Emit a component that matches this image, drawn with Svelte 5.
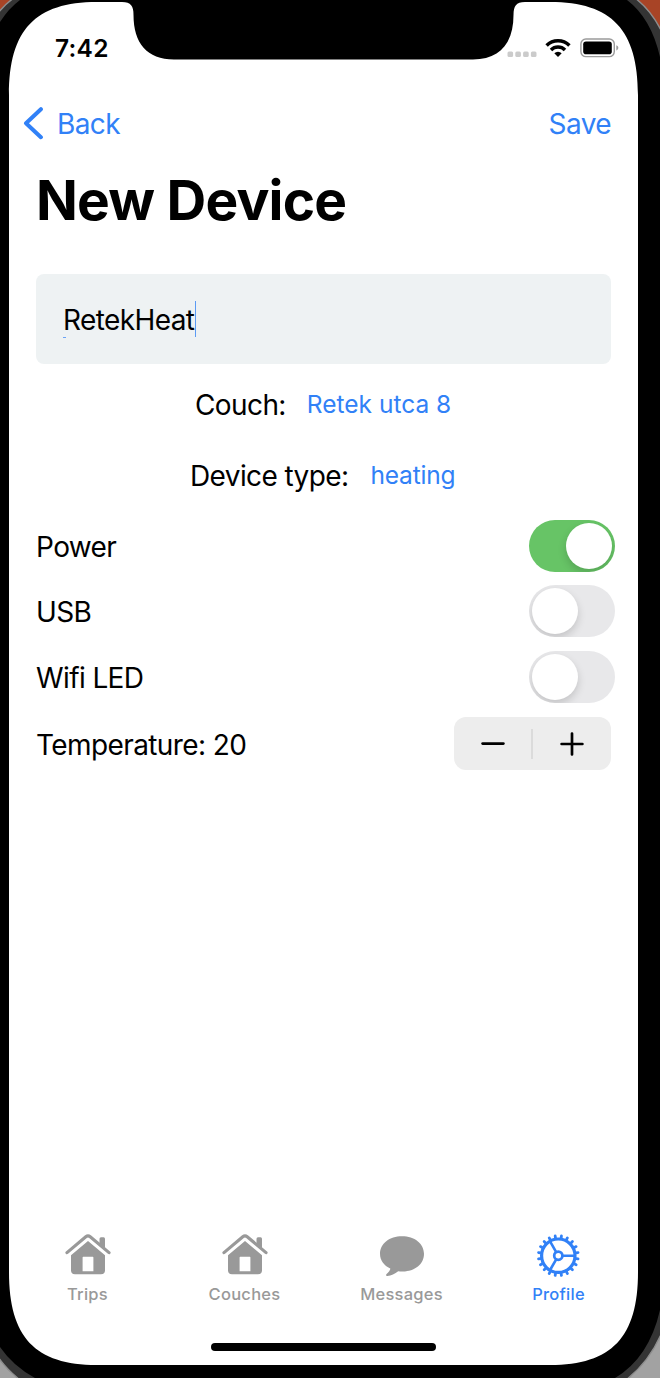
<script>
  let power = $state(true);
  let usb = $state(false);
  let wifi = $state(false);
  let temperature = $state(20);

  const teeth = Array.from({ length: 20 }, (_, i) => i * 18 + 9);
</script>

<div class="device">
  <svg class="bezel" viewBox="0 0 660 1378" aria-hidden="true">
    <rect width="660" height="1378" fill="#000" />
    <g fill="#343434">
      <path d="M0 0H20Q9 8 0 22Z" />
      <path d="M627 0Q651 18 660 57V0Z" />
      <path d="M0 1347Q13 1366 35 1378H0Z" />
      <path d="M660 1310Q649 1358 615 1378H660Z" />
    </g>
    <g stroke="#8d8d8d" stroke-width="1.400">
      <path d="M-2 -2H14Q5 4 -2 13Z" fill="#a84426" />
      <path d="M635 -2Q651 10 662 32V-2Z" fill="#a84426" />
      <path d="M-2 1357Q7 1370 20 1380H-2Z" fill="#a2a2a2" />
      <path d="M662 1332Q650 1361 626 1380H662Z" fill="#a2a2a2" />
    </g>
    <path d="M9 95C9 30 35 2 97 2H122C131 2 133.500 6 133.500 15C133.500 43 147 59.500 174 59.500H473C500 59.500 513.500 43 513.500 15C513.500 6 516 2 525 2H550C612 2 638 30 638 95V1272C638 1337 612 1365 550 1365H97C35 1365 9 1337 9 1272Z" fill="#fff" />
  </svg>

  <div class="screen">
    <header class="status">
      <span class="time">7:42</span>
      <div class="signals">
        <svg width="30" height="8" viewBox="0 0 30 8" fill="#cbcbcb">
          <rect x="0.500" y="1.500" width="5.600" height="5.400" rx="1.500" />
          <rect x="8.300" y="1.500" width="5.600" height="5.400" rx="1.500" />
          <rect x="16.100" y="1.500" width="5.600" height="5.400" rx="1.500" />
          <rect x="23.900" y="1.500" width="5.600" height="5.400" rx="1.500" />
        </svg>
        <svg class="wifi" width="26" height="20" viewBox="0 0 26 20" fill="none" stroke="#000" stroke-width="3.500">
          <path d="M1.600 7.400A16.200 16.200 0 0 1 24.400 7.400" />
          <path d="M6 11.900A10 10 0 0 1 20 11.900" />
          <path d="M13 19L9.300 15.300A5.300 5.300 0 0 1 16.700 15.300Z" fill="#000" stroke="none" />
        </svg>
        <svg class="battery" width="39" height="20" viewBox="0 0 39 20">
          <rect x="0.900" y="1" width="33.400" height="17.600" rx="5" fill="none" stroke="#9b9b9b" stroke-width="1.400" />
          <rect x="3.200" y="3.400" width="28.600" height="12.800" rx="2.800" fill="#000" />
          <path d="M36.300 7.300C39 8 39 11.700 36.300 12.400Z" fill="#9b9b9b" />
        </svg>
      </div>
    </header>

    <nav class="navbar">
      <button class="link back">
        <svg width="22" height="34" viewBox="0 0 22 34" fill="none" stroke="#3181f7" stroke-width="4" stroke-linecap="round" stroke-linejoin="round"><path d="M18.900 2.200L4 16.200L18.900 30.200" /></svg>
        <span>Back</span>
      </button>
      <button class="link save">Save</button>
    </nav>

    <h1>New Device</h1>

    <div class="field"><span class="name">RetekHeat</span><i class="caret"></i></div>

    <div class="picker couch"><span>Couch:</span><button class="link value">Retek utca 8</button></div>
    <div class="picker type"><span>Device type:</span><button class="link value heating">heating</button></div>

    <div class="rows">
      <div class="row">
        <span>Power</span>
        <button class="toggle" class:on={power} aria-label="Power" onclick={() => (power = !power)}><i></i></button>
      </div>
      <div class="row">
        <span>USB</span>
        <button class="toggle" class:on={usb} aria-label="USB" onclick={() => (usb = !usb)}><i></i></button>
      </div>
      <div class="row">
        <span>Wifi LED</span>
        <button class="toggle" class:on={wifi} aria-label="Wifi LED" onclick={() => (wifi = !wifi)}><i></i></button>
      </div>
      <div class="row last">
        <span>Temperature: {temperature}</span>
        <div class="stepper">
          <button aria-label="Decrease" onclick={() => temperature--}>
            <svg width="24" height="24" viewBox="0 0 24 24"><path d="M1.600 11.600H22.400" /></svg>
          </button>
          <i></i>
          <button aria-label="Increase" onclick={() => temperature++}>
            <svg width="24" height="24" viewBox="0 0 24 24"><path d="M1.600 12H22.400M12 1.600V22.400" /></svg>
          </button>
        </div>
      </div>
    </div>

    {#snippet house()}
      <svg width="48" height="44" viewBox="0 0 48 44" fill="#999">
        <path d="M35.500 12V5.800Q35.500 4.300 37 4.300H39.600Q41 4.300 41 5.800V17Z" />
        <path d="M3 19.600L21.800 3.800Q24 2 26.200 3.800L45 19.600" fill="none" stroke="#999" stroke-width="3.200" stroke-linecap="round" />
        <path fill-rule="evenodd" d="M24 8L41 22.200V37.200Q41 41.200 37 41.200H11Q7 41.200 7 37.200V22.200ZM19.200 23.800Q18.600 23.800 18.600 24.500V38.200H29.400V24.500Q29.400 23.800 28.800 23.800Z" />
      </svg>
    {/snippet}

    <footer class="tabs">
      <button>{@render house()}<span>Trips</span></button>
      <button>{@render house()}<span>Couches</span></button>
      <button>
        <svg width="48" height="44" viewBox="0 0 48 44" fill="#999">
          <path d="M24 3.200C36.500 3.200 46 10.500 46 20.800C46 31.200 37 38.500 24.500 38.500C22.800 38.500 21.500 38.400 20.200 38.200C17 40.800 13 42.800 9.500 43C8 43 7.700 41.900 8.600 41C10.500 39.300 12.200 37.600 12.300 35.600C6 32.600 2 27.300 2 20.800C2 10.500 11.500 3.200 24 3.200Z" />
        </svg>
        <span>Messages</span>
      </button>
      <button class="active">
        <svg width="48" height="44" viewBox="0 0 48 44" fill="none" stroke="#3181f7">
          <g transform="translate(23.300 22.700)">
            <circle r="16.700" stroke-width="3.200" />
            <circle r="4.100" stroke-width="2.700" />
            <path d="M4.500 0H16.500M-2.250 -3.900L-8.250 -14.300M-2.250 3.900L-8.250 14.300" stroke-width="2.600" />
            {#each teeth as angle}
              <path d="M18 0H20" stroke-width="2.800" stroke-linecap="round" transform="rotate({angle})" />
            {/each}
          </g>
        </svg>
        <span>Profile</span>
      </button>
    </footer>

    <div class="home"></div>
  </div>
</div>

<style>
  :global(body) { margin: 0; }
  * { box-sizing: border-box; }
  .device {
    position: relative;
    width: 660px;
    height: 1378px;
    overflow: hidden;
    font-family: Inter, "Liberation Sans", sans-serif;
    font-size: 28px;
    line-height: 36px;
    letter-spacing: -0.600px;
    color: #000;
    white-space: nowrap;
  }
  .bezel { position: absolute; inset: 0; width: 660px; height: 1378px; }
  .screen {
    position: relative;
    display: flex;
    flex-direction: column;
    width: 629px;
    height: 1365px;
    margin-left: 9px;
  }
  button {
    padding: 0;
    border: 0;
    background: none;
    font: inherit;
    color: inherit;
    letter-spacing: inherit;
  }
  .status {
    display: flex;
    justify-content: space-between;
    height: 96px;
    padding: 30px 19px 0 46px;
  }
  .time { font-size: 24.500px; font-weight: 600; letter-spacing: 0.250px; }
  .signals { display: flex; align-items: flex-start; padding-top: 8px; }
  .signals svg:first-child { margin-top: 12px; }
  .signals .wifi { margin: 0 9px 0 8px; }
  .navbar {
    display: flex;
    align-items: center;
    justify-content: space-between;
    height: 55px;
    padding: 0 27px 0 13px;
  }
  .link { color: #3181f7; }
  .back { display: flex; align-items: center; gap: 13px; }
  h1 {
    height: 66px;
    margin: 16px 0 41px 27px;
    font-size: 55px;
    line-height: 66px;
    font-weight: 700;
    letter-spacing: -0.800px;
  }
  .field {
    display: flex;
    align-items: center;
    height: 90px;
    margin: 0 27px;
    padding-left: 27px;
    padding-top: 2px;
    border-radius: 8px;
    background: #eef2f3;
  }
  .name { background: linear-gradient(#6ba3f5, #6ba3f5) 0 100% / 3px 1px no-repeat; }
  .caret { width: 1px; height: 36px; margin: -2px 0 0 1px; background: #5b9bf3; }
  .picker { display: flex; align-items: center; margin-left: 186px; height: 36px; }
  .picker span { padding-top: 1px; }
  .couch { margin-top: 22px; }
  .type { margin: 35px 0 20px 181px; }
  .value { margin: -1px 0 0 21px; font-size: 24.500px; letter-spacing: 0; }
  .heating { margin-left: 22px; letter-spacing: -0.200px; }
  .rows { padding: 0 27px; }
  .row { display: flex; align-items: center; justify-content: space-between; height: 65.500px; }
  .row span { padding-top: 2px; }
  .last { height: 68px; }
  .toggle {
    width: 86px;
    height: 52px;
    margin-right: -4px;
    padding: 3px;
    border-radius: 26px;
    background: #e8e8ea;
    overflow: hidden;
  }
  .toggle i {
    display: block;
    width: 46px;
    height: 46px;
    border-radius: 50%;
    background: #fff;
    box-shadow: 0 4px 9px rgba(0, 0, 0, 0.16);
  }
  .on { background: #67c466; }
  .on i { margin-left: 34px; }
  .stepper {
    display: flex;
    align-items: center;
    width: 157px;
    height: 53px;
    border-radius: 12px;
    background: #ededed;
  }
  .stepper button { display: grid; place-items: center; flex: 1; height: 53px; }
  .stepper button:first-child { flex: 0 0 77px; }
  .stepper i { width: 2px; height: 30px; background: #dbdbdb; }
  .stepper path { stroke: #000; stroke-width: 2.700; stroke-linecap: round; }
  .tabs { display: flex; margin-top: auto; height: 78px; color: #999; }
  .tabs button {
    display: flex;
    flex-direction: column;
    align-items: center;
    justify-content: flex-start;
    flex: 1 1 0;
    font-size: 16.500px;
    font-weight: 500;
    line-height: 24px;
    letter-spacing: 0.250px;
    gap: 5px;
  }
  .tabs .active { color: #3181f7; padding-right: 1px; }
  .home { width: 225px; height: 8px; margin: 32px auto 14px 202px; border-radius: 4px; background: #000; }
</style>
